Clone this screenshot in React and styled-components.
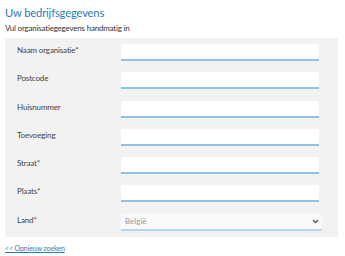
import styled, { createGlobalStyle } from "styled-components";

const fields = [
  "Naam organisatie*",
  "Postcode",
  "Huisnummer",
  "Toevoeging",
  "Straat*",
  "Plaats*",
];

const GlobalStyle = createGlobalStyle`
  body {
    margin: 0;
    background: #fff;
    font-family: Lato, "Open Sans", sans-serif;
  }
`;

function App() {
  return (
    <Page>
      <GlobalStyle />
      <Title>Uw bedrijfsgegevens</Title>
      <Intro>Vul organisatiegegevens handmatig in</Intro>
      <Panel>
        {fields.map((name) => (
          <Row key={name}>
            <Label>{name}</Label>
            <Input type="text" />
          </Row>
        ))}
        <Row>
          <Label>Land*</Label>
          <SelectBox>
            <span>België</span>
            <svg width="7" height="5" viewBox="0 0 7 5">
              <path d="M1 1l2.5 2.5L6 1" fill="none" stroke="#555" strokeWidth="1.4" />
            </svg>
          </SelectBox>
        </Row>
      </Panel>
      <BackLink href="#">&lt;&lt; Opnieuw zoeken</BackLink>
    </Page>
  );
}

const Page = styled.div`
  width: 345px;
  height: 256px;
  padding: 6px 7px 0 5px;
  box-sizing: border-box;
  display: flex;
  flex-direction: column;
`;

const Title = styled.div`
  font-size: 11.2px;
  line-height: 13px;
  color: #2b7bb9;
  letter-spacing: -0.15px;
`;

const Intro = styled.div`
  margin-top: 4px;
  font-size: 8px;
  line-height: 10px;
  color: #333;
  letter-spacing: -0.2px;
`;

const Panel = styled.div`
  margin-top: 5px;
  background: #f2f2f2;
  padding: 6px 19px 6px 12px;
  display: flex;
  flex-direction: column;
  gap: 11.3px;
`;

const Row = styled.div`
  display: flex;
  align-items: flex-start;
  height: 17px;
`;

const Label = styled.div`
  width: 104px;
  flex-shrink: 0;
  padding-top: 2px;
  font-size: 8px;
  line-height: 9px;
  color: #444;
  letter-spacing: -0.15px;
`;

const Input = styled.input`
  width: 198px;
  height: 17px;
  box-sizing: border-box;
  border: none;
  border-bottom: 2px solid #8fc3df;
  background: #fff;
  padding: 0 4px;
  outline: none;
`;

const SelectBox = styled.div`
  width: 201px;
  height: 17px;
  box-sizing: border-box;
  border-bottom: 2px solid #b8d8ea;
  background: #f9f9f9;
  padding: 0 3px 0 4px;
  display: flex;
  align-items: center;
  justify-content: space-between;
  font-size: 8px;
  color: #999;
  margin-right: -3px;
`;

const BackLink = styled.a`
  margin-top: 7px;
  font-size: 7px;
  line-height: 9px;
  color: #2b7bb9;
  text-decoration: underline;
  letter-spacing: -0.1px;
`;

export default App;
